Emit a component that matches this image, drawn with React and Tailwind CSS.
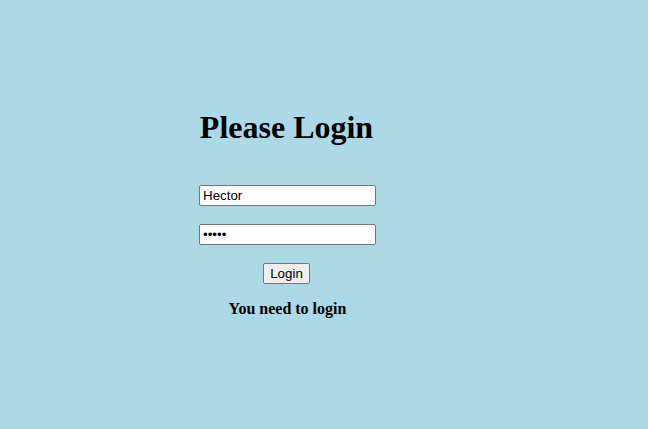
export default function App() {
  return (
    <div className="min-h-[429px] w-full bg-[#add8e6] font-['Liberation_Serif',serif] text-black">
      <div className="ml-[199px] flex w-[177px] flex-col items-center pt-[109px]">
        <h1 className="mr-[2px] text-[32px] font-bold leading-[36px] whitespace-nowrap">Please Login</h1>
        <input
          type="text"
          defaultValue="Hector"
          className="mt-[40px] h-[21px] w-[177px] rounded-[2px] border border-[#767676] bg-white px-[3px] font-['Liberation_Sans',Arial,sans-serif] text-[13.33px] outline-none"
        />
        <input
          type="password"
          defaultValue="12345"
          className="mt-[18px] h-[21px] w-[177px] rounded-[2px] border border-[#767676] bg-white px-[3px] font-['Liberation_Sans',Arial,sans-serif] text-[13.33px] outline-none"
        />
        <button className="mt-[18px] mr-[2px] h-[21px] rounded-[2px] border border-[#767676] bg-[#efefef] px-[6px] font-['Liberation_Sans',Arial,sans-serif] text-[13.33px] leading-none">
          Login
        </button>
        <p className="mt-[16px] text-[16px] font-bold leading-[18px] whitespace-nowrap">You need to login</p>
      </div>
    </div>
  );
}
